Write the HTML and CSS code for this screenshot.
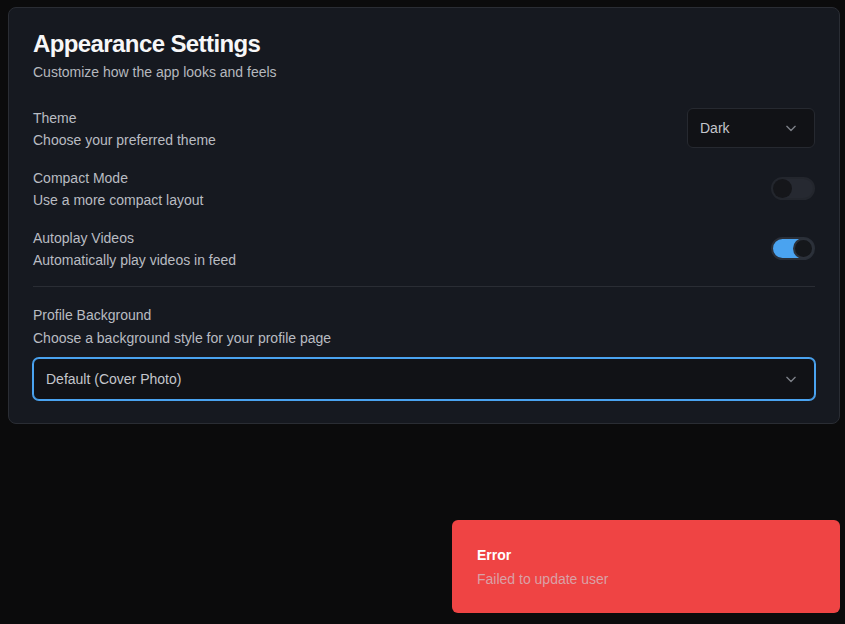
FILE: index.html
```html
<!DOCTYPE html>
<html>
<head>
<meta charset="utf-8">
<link rel="stylesheet" href="styles.css">
</head>
<body>
<div class="card">
  <h1 class="title">Appearance Settings</h1>
  <p class="subtitle">Customize how the app looks and feels</p>

  <div class="rows">
    <div class="row">
      <div class="text">
        <div class="label">Theme</div>
        <div class="desc">Choose your preferred theme</div>
      </div>
      <div class="select small">
        <span>Dark</span>
        <svg class="chev" width="20" height="20" viewBox="0 0 24 24" fill="none" stroke="currentColor" stroke-width="1.6" stroke-linecap="round" stroke-linejoin="round"><path d="M7 10l5 5 5-5"/></svg>
      </div>
    </div>
    <div class="row">
      <div class="text">
        <div class="label">Compact Mode</div>
        <div class="desc">Use a more compact layout</div>
      </div>
      <div class="toggle"><span class="knob"></span></div>
    </div>
    <div class="row">
      <div class="text">
        <div class="label">Autoplay Videos</div>
        <div class="desc">Automatically play videos in feed</div>
      </div>
      <div class="toggle on"><span class="knob"></span></div>
    </div>
  </div>

  <div class="sep"></div>

  <div class="label">Profile Background</div>
  <div class="desc desc2">Choose a background style for your profile page</div>
  <div class="select wide">
    <span>Default (Cover Photo)</span>
    <svg class="chev" width="20" height="20" viewBox="0 0 24 24" fill="none" stroke="currentColor" stroke-width="1.6" stroke-linecap="round" stroke-linejoin="round"><path d="M7 10l5 5 5-5"/></svg>
  </div>
</div>

<div class="toast">
  <div class="toast-title">Error</div>
  <div class="toast-desc">Failed to update user</div>
</div>
</body>
</html>
```

FILE: styles.css
```css
* { box-sizing: border-box; }
html, body { height: 100%; }
body {
  margin: 0;
  padding: 7px 0 0 8px;
  background: #0b0b0c;
  font-family: "Liberation Sans", Arial, sans-serif;
  color: #c4c6cc;
  overflow: hidden;
}
.card {
  width: 832px;
  background: #161920;
  border: 1px solid #2a2d34;
  border-radius: 8px;
  padding: 20px 24px 23px 24px;
}
.title {
  margin: 0;
  font-size: 24px;
  line-height: 32px;
  font-weight: 700;
  letter-spacing: -0.6px;
  color: #f7f7f8;
}
.subtitle {
  margin: 2px 0 0 0;
  font-size: 14px;
  line-height: 20px;
  color: #b5b8be;
}
.rows {
  margin-top: 26px;
  display: flex;
  flex-direction: column;
  gap: 18px;
}
.row {
  display: flex;
  align-items: center;
  justify-content: space-between;
}
.label {
  font-size: 14px;
  line-height: 20px;
  color: #b9bcc2;
}
.desc {
  font-size: 14px;
  line-height: 20px;
  margin-top: 2px;
  color: #b9bcc2;
}
.desc2 { margin-top: 3px; }
.select {
  display: flex;
  align-items: center;
  justify-content: space-between;
  background: #111216;
  border: 1px solid #262930;
  border-radius: 6px;
  font-size: 14px;
  color: #c4c6cc;
}
.select.small {
  width: 128px;
  height: 40px;
  padding: 0 13px 0 12px;
  margin-top: -2px;
}
.select.wide {
  margin-top: 10px;
  height: 42px;
  padding: 0 13px 0 12px;
  border-color: #4aa3f0;
  box-shadow: 0 0 0 1px #4aa3f0;
}
.chev { color: #7d8088; }
.toggle {
  width: 44px;
  height: 23px;
  border-radius: 12px;
  background: #262931;
  border: 2px solid #23262d;
  display: flex;
  align-items: center;
  padding: 0;
  margin-top: -2px;
}
.knob {
  width: 19px;
  height: 19px;
  border-radius: 50%;
  background: #15161a;
}
.toggle.on {
  background: #4aa3f0;
  border-color: #2a2f38;
  justify-content: flex-end;
}
.toggle.on .knob {
  width: 21px;
  height: 21px;
  margin-right: -1px;
  border: 2px solid #2c313a;
  background: #15171b;
}
.sep {
  height: 1px;
  background: #2a2d34;
  margin: 16px 0 18px 0;
}
.toast {
  position: absolute;
  right: 5px;
  bottom: 11px;
  width: 388px;
  height: 93px;
  background: #ef4444;
  border-radius: 6px;
  padding: 25px 25px;
}
.toast-title {
  font-size: 14px;
  line-height: 20px;
  font-weight: 700;
  color: #ffffff;
}
.toast-desc {
  margin-top: 4px;
  font-size: 14px;
  line-height: 20px;
  color: #d9a1a6;
}
```
